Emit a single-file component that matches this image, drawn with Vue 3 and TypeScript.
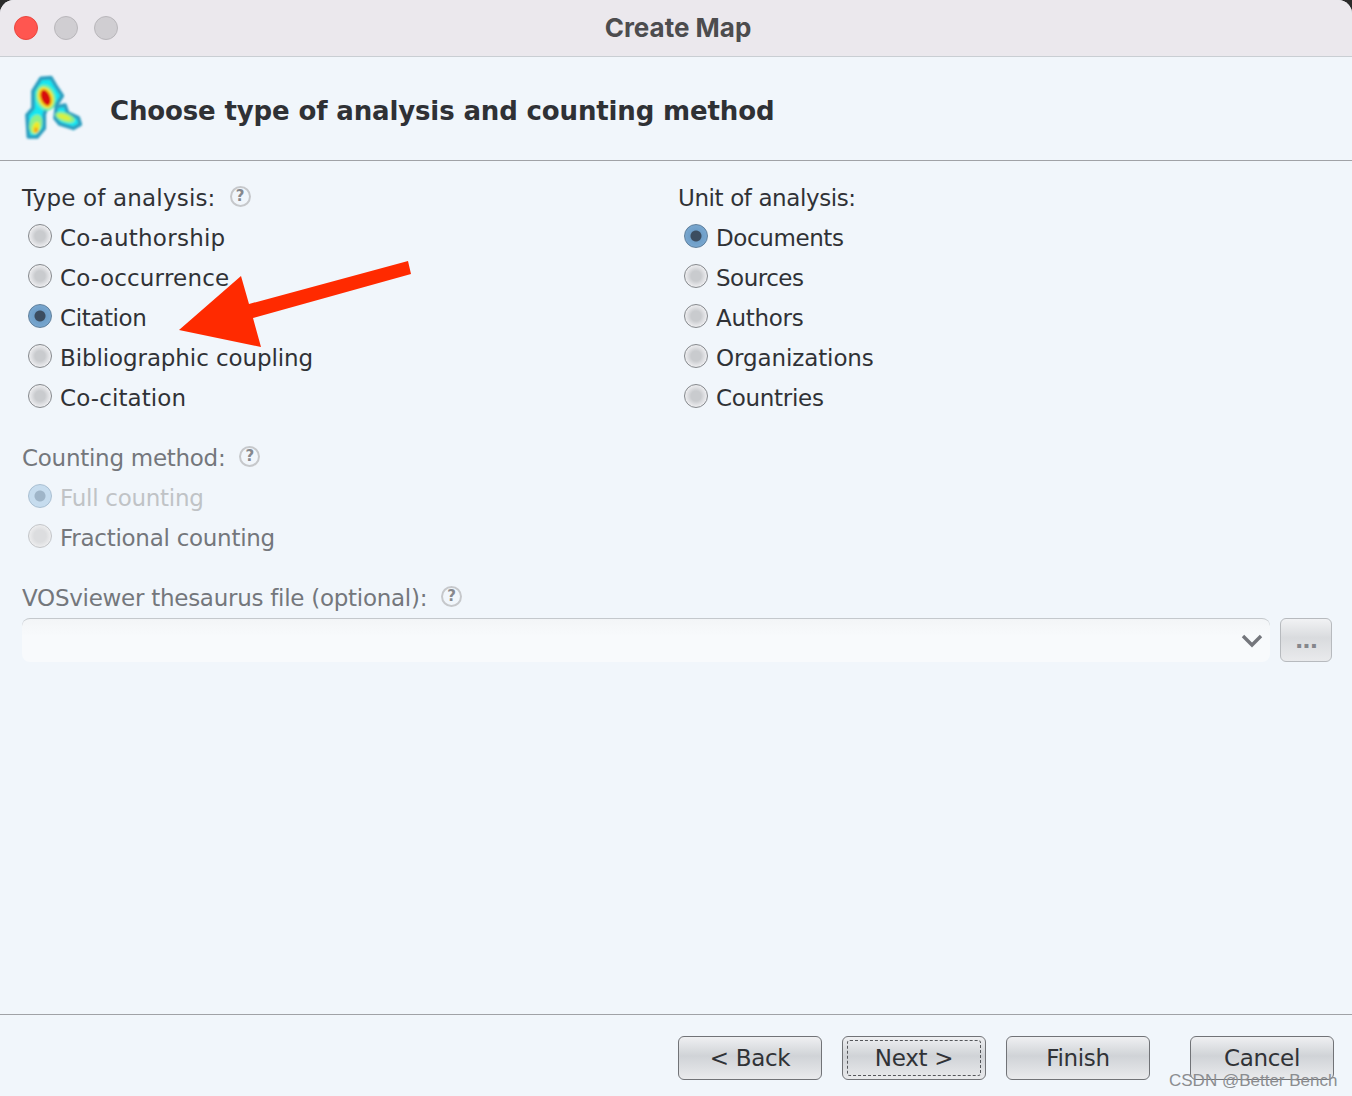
<script setup lang="ts">
const analysis = [
  { label: 'Co-authorship', on: false, ls: 0.25 },
  { label: 'Co-occurrence', on: false, ls: 0.2 },
  { label: 'Citation', on: true, ls: -0.4 },
  { label: 'Bibliographic coupling', on: false, ls: -0.1 },
  { label: 'Co-citation', on: false, ls: 0.1 },
]
const units = [
  { label: 'Documents', on: true, ls: -0.4 },
  { label: 'Sources', on: false, ls: -0.5 },
  { label: 'Authors', on: false, ls: -0.3 },
  { label: 'Organizations', on: false, ls: -0.1 },
  { label: 'Countries', on: false, ls: -0.3 },
]
const outline = [
  'M78 40 L108 38 L122 62 L142 92 L126 118 L96 128 L88 146 L88 190 L66 216 L40 216 L36 150 L54 130 L54 78 Z',
  'M124 126 L150 120 L158 144 L190 158 L196 178 L175 190 L134 177 L120 160 Z',
]
</script>

<template>
  <div class="window">
    <header class="titlebar">
      <div class="lights">
        <span class="light red"></span>
        <span class="light"></span>
        <span class="light"></span>
      </div>
      <span class="title">Create Map</span>
    </header>

    <section class="banner">
      <svg class="logo" width="80" height="85" viewBox="0 0 240 255">
        <defs>
          <filter id="soft" x="-20%" y="-20%" width="140%" height="140%">
            <feGaussianBlur stdDeviation="3" />
          </filter>
        </defs>
        <g filter="url(#soft)">
          <path
            v-for="d in outline"
            :key="d"
            :d="d"
            fill="#16e6f0"
            stroke="#2f9fc0"
            stroke-width="11"
            stroke-linejoin="round"
          />
          <ellipse cx="92" cy="98" rx="30" ry="40" fill="#6ff0a8" transform="rotate(-15 92 98)" />
          <ellipse cx="92" cy="98" rx="23" ry="33" fill="#f4e020" transform="rotate(-20 92 98)" />
          <ellipse cx="92" cy="98" rx="14" ry="25" fill="#d80c0c" transform="rotate(-20 92 98)" />
          <ellipse cx="62" cy="178" rx="19" ry="30" fill="#8ef08a" transform="rotate(15 62 178)" />
          <ellipse cx="63" cy="188" rx="11" ry="18" fill="#ecea28" transform="rotate(15 63 188)" />
          <ellipse cx="63" cy="195" rx="6" ry="8" fill="#f6a818" />
          <ellipse cx="150" cy="157" rx="31" ry="14" fill="#8ef08a" transform="rotate(20 150 157)" />
          <ellipse cx="148" cy="157" rx="21" ry="8" fill="#d8f040" transform="rotate(20 148 157)" />
        </g>
      </svg>
      <h1>Choose type of analysis and counting method</h1>
    </section>

    <main class="content">
      <div class="columns">
        <div class="column">
          <div class="label"><span class="airy">Type of analysis:</span><span class="help">?</span></div>
          <div v-for="o in analysis" :key="o.label" class="radio">
            <span class="dot" :class="{ on: o.on }"></span>
            <span :style="{ letterSpacing: o.ls + 'px' }">{{ o.label }}</span>
          </div>
        </div>
        <div class="column">
          <div class="label"><span class="unit">Unit of analysis:</span></div>
          <div v-for="o in units" :key="o.label" class="radio">
            <span class="dot" :class="{ on: o.on }"></span>
            <span :style="{ letterSpacing: o.ls + 'px' }">{{ o.label }}</span>
          </div>
        </div>
      </div>

      <div class="group disabled">
        <div class="label"><span class="tight">Counting method:</span><span class="help">?</span></div>
        <div class="radio faint"><span class="dot on"></span><span class="tight">Full counting</span></div>
        <div class="radio"><span class="dot"></span><span class="tight">Fractional counting</span></div>
      </div>

      <div class="group disabled thesaurus">
        <div class="label"><span class="tight">VOSviewer thesaurus file (optional):</span><span class="help">?</span></div>
        <div class="file-row">
          <div class="combo">
            <svg width="24" height="16" viewBox="0 0 24 16">
              <path d="M3 3 L12 12 L21 3" fill="none" stroke="#74767c" stroke-width="3.4" />
            </svg>
          </div>
          <button class="browse">...</button>
        </div>
      </div>
    </main>

    <footer class="footer">
      <button class="btn">&lt; Back</button>
      <button class="btn focus"><span>Next &gt;</span></button>
      <button class="btn">Finish</button>
      <button class="btn cancel">Cancel</button>
    </footer>

    <svg class="arrow" width="1352" height="1096" viewBox="0 0 1352 1096">
      <polygon points="408,261 411,274 253,318 261,347 179,330 241,276 249,304" fill="#ff2a00" />
    </svg>
    <span class="watermark">CSDN @Better Bench</span>
  </div>
</template>

<style>
html, body { margin: 0; background: #2b2b2b; }
</style>

<style scoped>
.window {
  position: relative;
  width: 1352px;
  height: 1096px;
  display: flex;
  flex-direction: column;
  overflow: hidden;
  border-radius: 14px 14px 0 0;
  background: #f1f6fb;
  color: #303236;
  font-family: "DejaVu Sans", sans-serif;
  font-size: 23px;
}
.titlebar {
  position: relative;
  flex: none;
  height: 56px;
  display: flex;
  align-items: center;
  justify-content: center;
  background: #ebe8ed;
  border-bottom: 1px solid #c9ced3;
}
.lights { position: absolute; left: 14px; top: 16px; display: flex; gap: 16px; }
.light {
  width: 24px;
  height: 24px;
  box-sizing: border-box;
  border-radius: 50%;
  background: #d0ced2;
  border: 1px solid #b9b7bb;
}
.light.red { background: #ff5650; border-color: #e9473f; }
.title {
  font-family: Inter, sans-serif;
  font-size: 26px;
  font-weight: 700;
  color: #4c4c4e;
  margin-top: -2px;
  margin-left: 4px;
}
.banner {
  flex: none;
  height: 104px;
  box-sizing: border-box;
  display: flex;
  align-items: center;
  padding-left: 15px;
  gap: 15px;
  border-bottom: 1px solid #a0a2a6;
}
.logo { margin-top: -3px; flex: none; }
h1 { margin: 4px 0 0; font-size: 26px; letter-spacing: -0.14px; font-weight: 700; color: #2f3135; }
.content { flex: 1; padding: 17px 20px 0 22px; }
.columns { display: flex; }
.column { flex: none; width: 656px; }
.label { height: 40px; display: flex; align-items: center; gap: 14px; }
.airy { letter-spacing: 0.18px; }
.unit { letter-spacing: -0.4px; }
.tight { letter-spacing: -0.27px; }
.radio { height: 40px; display: flex; align-items: center; gap: 8px; padding-left: 6px; }
.dot {
  flex: none;
  width: 24px;
  height: 24px;
  margin-bottom: 4px;
  box-sizing: border-box;
  border-radius: 50%;
  border: 1px solid #85888c;
  background: radial-gradient(circle at 50% 50%, #c9cbce 0 5px, #dcdde0 8px, #f3f3f5 12px);
}
.dot.on {
  background: radial-gradient(circle at 50% 50%, #3c4d60 0 5px, #6e9ec8 6px, #7aa8d0 12px);
  border-color: #5f7f9c;
}
.help {
  width: 21px;
  height: 21px;
  margin-bottom: 4px;
  box-sizing: border-box;
  border-radius: 50%;
  border: 2px solid #c6c8cb;
  color: #86888d;
  font-size: 15px;
  font-weight: 700;
  display: inline-flex;
  align-items: center;
  justify-content: center;
}
.group { margin-top: 20px; }
.disabled { color: #74777c; }
.disabled .dot { border-color: #c3c5c8; background: radial-gradient(circle, #dcdddf 0 6px, #f0f0f1 12px); }
.faint { color: #c0c3c6; }
.faint .dot.on { border-color: #a9bfd2; background: radial-gradient(circle, #9fb5c8 0 5px, #c6dcee 6px); }
.file-row { display: flex; gap: 10px; }
.combo {
  flex: 1;
  height: 44px;
  box-sizing: border-box;
  display: flex;
  align-items: center;
  justify-content: flex-end;
  padding-right: 6px;
  border-radius: 8px;
  border-top: 1px solid #c4c8cc;
  background: linear-gradient(#f3f5f7, #f8fafc 40%);
}
.browse {
  width: 52px;
  height: 44px;
  padding: 0;
  border: 1px solid #b7babe;
  border-radius: 6px;
  background: linear-gradient(#f1f2f4, #d9dbde 45%, #e9eaec);
  color: #85878c;
  font: 700 22px "DejaVu Sans", sans-serif;
  letter-spacing: -1px;
}
.footer {
  flex: none;
  height: 82px;
  box-sizing: border-box;
  display: flex;
  align-items: flex-start;
  gap: 20px;
  padding: 21px 18px 0 0;
  justify-content: flex-end;
  border-top: 1px solid #a0a2a6;
}
.btn {
  width: 144px;
  height: 44px;
  padding: 0;
  border: 1px solid #717377;
  border-radius: 6px;
  background: linear-gradient(#eff0f2, #d0d3d7 45%, #e9eaec);
  color: #303236;
  font: 23px "DejaVu Sans", sans-serif;
  letter-spacing: -0.3px;
}
.focus span {
  display: flex;
  align-items: center;
  justify-content: center;
  height: 34px;
  margin: 0 4px;
  border: 1px dashed #55575b;
  border-radius: 3px;
}
.cancel { margin-left: 20px; }
.arrow { position: absolute; left: 0; top: 0; pointer-events: none; }
.watermark {
  position: absolute;
  left: 1169px;
  top: 1071px;
  font-family: "Liberation Sans", sans-serif;
  font-size: 17px;
  color: #8b8d90;
  white-space: nowrap;
}
</style>
